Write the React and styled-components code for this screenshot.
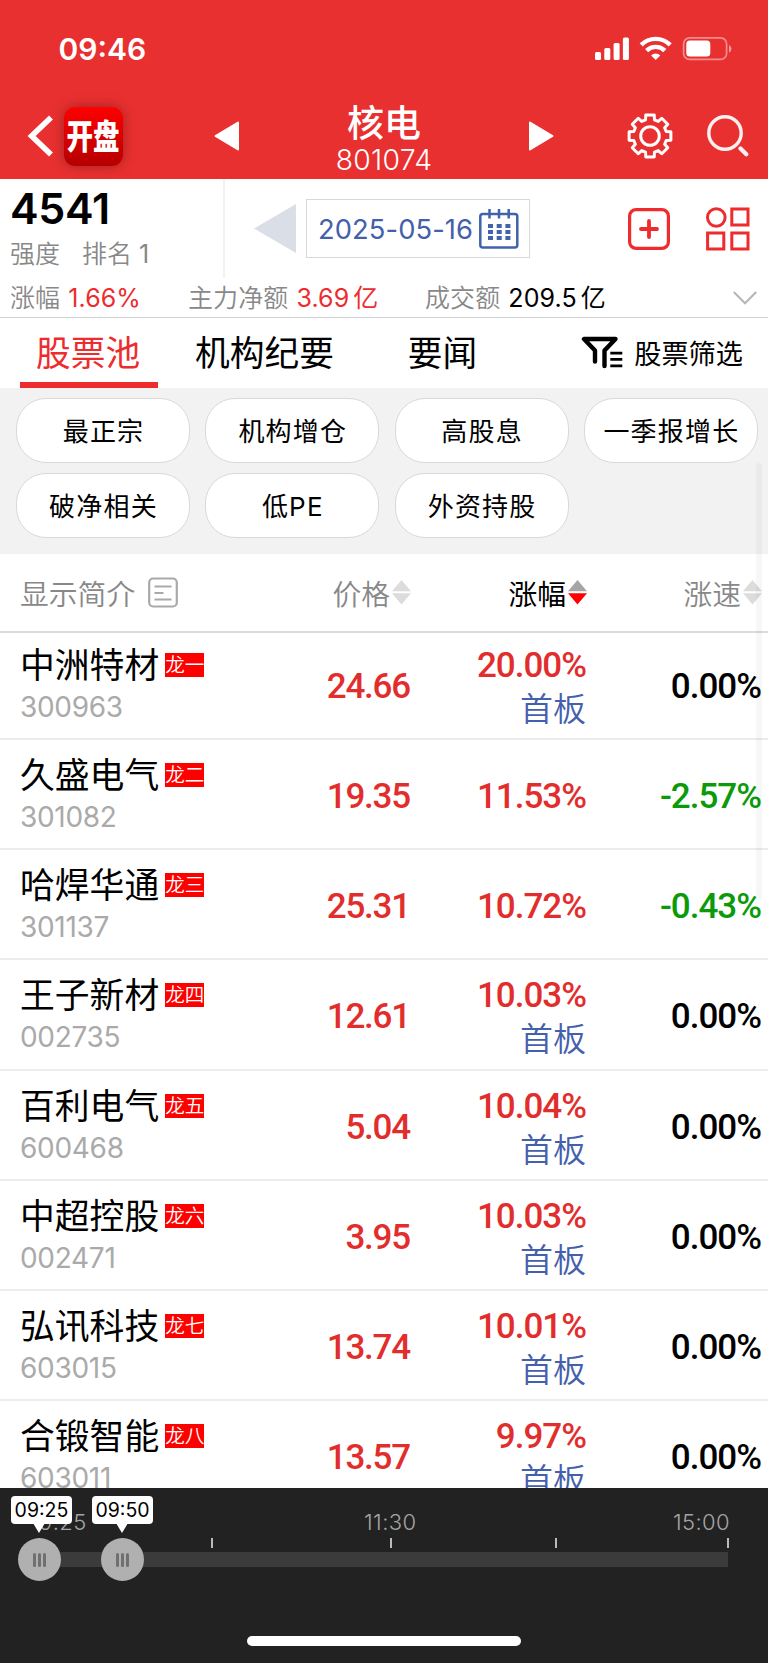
import { useState } from "react";
import styled, { createGlobalStyle } from "styled-components";

const STOCKS = [
  { name: "中洲特材", tag: "龙一", code: "300963", price: "24.66", change: "20.00%", board: "首板", speed: "0.00%" },
  { name: "久盛电气", tag: "龙二", code: "301082", price: "19.35", change: "11.53%", speed: "-2.57%" },
  { name: "哈焊华通", tag: "龙三", code: "301137", price: "25.31", change: "10.72%", speed: "-0.43%" },
  { name: "王子新材", tag: "龙四", code: "002735", price: "12.61", change: "10.03%", board: "首板", speed: "0.00%" },
  { name: "百利电气", tag: "龙五", code: "600468", price: "5.04", change: "10.04%", board: "首板", speed: "0.00%" },
  { name: "中超控股", tag: "龙六", code: "002471", price: "3.95", change: "10.03%", board: "首板", speed: "0.00%" },
  { name: "弘讯科技", tag: "龙七", code: "603015", price: "13.74", change: "10.01%", board: "首板", speed: "0.00%" },
  { name: "合锻智能", tag: "龙八", code: "603011", price: "13.57", change: "9.97%", board: "首板", speed: "0.00%" },
];
const TABS = ["股票池", "机构纪要", "要闻"];
const CHIPS = ["最正宗", "机构增仓", "高股息", "一季报增长", "破净相关", "低PE", "外资持股"];
const TICKS = [0, 172.5, 351.5, 517, 689];
const HANDLES = [
  { time: "09:25", left: 0.5, shift: 2 },
  { time: "09:50", left: 83.5, shift: 0 },
];

function StatusIcons() {
  return (
    <svg width="140" height="28" viewBox="0 0 140 28" fill="#fff">
      <rect x="0" y="17" width="6" height="8" rx="1.5" />
      <rect x="9.3" y="13" width="6" height="12" rx="1.5" />
      <rect x="18.6" y="8" width="6" height="17" rx="1.5" />
      <rect x="27.9" y="2.5" width="6" height="22.5" rx="1.5" />
      <g fill="none" stroke="#fff" strokeWidth="4.4">
        <path d="M46.2 9.9a20.5 20.5 0 0 1 29 0" />
        <path d="M51.6 15.6a13 13 0 0 1 18.2 0" />
      </g>
      <path d="M60.7 25l-4.6-4.6a6.6 6.6 0 0 1 9.2 0z" />
      <rect x="88.6" y="2.8" width="43" height="21.6" rx="6" fill="none" stroke="#fff" strokeOpacity="0.45" strokeWidth="1.7" />
      <rect x="91.3" y="5.6" width="24" height="16" rx="3.5" />
      <path d="M134 10v7.6c3.2-1.6 3.2-6 0-7.6z" fillOpacity="0.5" />
    </svg>
  );
}

function GearIcon() {
  // eight flat teeth around a round hub
  const points = [];
  for (let i = 0; i < 8; i++) {
    const base = (i * Math.PI) / 4 - Math.PI / 2;
    [[-0.27, 16.8], [-0.2, 21.3], [0.2, 21.3], [0.27, 16.8]].forEach(([a, r]) => {
      points.push(`${(23 + r * Math.cos(base + a)).toFixed(2)},${(23 + r * Math.sin(base + a)).toFixed(2)}`);
    });
  }
  return (
    <svg width="46" height="46" viewBox="0 0 46 46" fill="none" stroke="#fff" strokeWidth="3" strokeLinejoin="round">
      <polygon points={points.join(" ")} />
      <circle cx="23" cy="23" r="9.3" />
    </svg>
  );
}

function CalendarIcon() {
  return (
    <svg width="40" height="40" viewBox="0 0 40 40" fill="none" stroke="#4063a9" strokeWidth="2.5">
      <rect x="1.3" y="5" width="37" height="33.5" rx="2.5" />
      <path d="M10.5 0v9.5M20 0v9.5M29.7 0v9.5" />
      <path d="M9 17h5M17.7 17h5M26.4 17h5M9 23h5M17.7 23h5M26.4 23h5M9 29h5M17.7 29h5M26.4 29h5" strokeWidth="3.8" />
    </svg>
  );
}

function FilterIcon() {
  return (
    <svg width="42" height="33" viewBox="0 0 42 33" fill="none" stroke="#000" strokeWidth="4.4" strokeLinecap="round" strokeLinejoin="round">
      <path d="M14 25.5V14.5L3 3h31.5L23.5 14.5V30" />
      <path d="M29.3 17.2h12M29.3 23.4h12M29.3 29.8h12" strokeWidth="2.7" strokeLinecap="butt" />
    </svg>
  );
}

function Sorter({ up = "#dcdcdc", down = "#dcdcdc" }) {
  return (
    <svg width="19" height="25" viewBox="0 0 19 25">
      <path d="M9.5 0L19 11.2H0z" fill={up} />
      <path d="M0 13.3h19L9.5 24.6z" fill={down} />
    </svg>
  );
}

function StockRow({ stock }) {
  return (
    <Row>
      <NameCell>
        <NameLine>
          <Name>{stock.name}</Name>
          <Badge>{stock.tag}</Badge>
        </NameLine>
        <Code>{stock.code}</Code>
      </NameCell>
      <Num $color="#e22d2d" $spacing="-1.2px">{stock.price}</Num>
      <div>
        <Num $color="#e22d2d">{stock.change}</Num>
        {stock.board && <Board>{stock.board}</Board>}
      </div>
      <Num $color={stock.speed.startsWith("-") ? "#0a9a0a" : "#000"}>{stock.speed}</Num>
    </Row>
  );
}

function App() {
  const [tab, setTab] = useState(0);

  return (
    <Page>
      <GlobalStyle />
      <Header>
        <StatusBar>
          <Clock>09:46</Clock>
          <StatusIcons />
        </StatusBar>
        <NavBar>
          <svg width="26" height="42" viewBox="0 0 26 42" fill="none" stroke="#fff" strokeWidth="5.6">
            <path d="M24 2.5L4.6 21l19.4 18.5" />
          </svg>
          <Logo><span>开盘</span></Logo>
          <PrevSector width="25" height="30" viewBox="0 0 25 30">
            <path d="M1.5 15L24 1.5v27z" fill="#fff" stroke="#fff" strokeWidth="2" strokeLinejoin="round" />
          </PrevSector>
          <TitleBox>
            <Title>核电</Title>
            <SubTitle>801074</SubTitle>
          </TitleBox>
          <svg width="25" height="30" viewBox="0 0 25 30">
            <path d="M1 1.5L23.5 15 1 28.5z" fill="#fff" stroke="#fff" strokeWidth="2" strokeLinejoin="round" />
          </svg>
          <NavTools>
            <GearIcon />
            <svg width="42" height="42" viewBox="0 0 42 42" fill="none" stroke="#f8f0f0" strokeWidth="3.4">
              <circle cx="18" cy="18" r="16.2" />
              <path d="M33.5 33.5l5.8 5.8" strokeWidth="4.2" strokeLinecap="round" />
            </svg>
          </NavTools>
        </NavBar>
      </Header>

      <Summary>
        <Strength>
          <Score>4541</Score>
          <Rank><span>强度</span><span>排名 <b>1</b></span></Rank>
        </Strength>
        <DateArea>
          <svg width="42" height="49" viewBox="0 0 42 49">
            <path d="M0 24.5L42 0v49z" fill="#d9dee7" />
          </svg>
          <DateBox>2025-05-16<CalendarIcon /></DateBox>
        </DateArea>
        <SummaryTools>
          <svg width="42" height="42" viewBox="0 0 42 42" fill="none" stroke="#ee2c2e" strokeWidth="3.2">
            <rect x="1.6" y="1.6" width="38.8" height="38.8" rx="6.5" />
            <path d="M21 13v16M13 21h16" strokeWidth="3.8" strokeLinecap="round" />
          </svg>
          <svg width="44" height="44" viewBox="0 0 44 44" fill="none" stroke="#ee2c2e" strokeWidth="3">
            <circle cx="10.3" cy="10.5" r="8.8" />
            <rect x="25.8" y="2" width="16.2" height="16" />
            <rect x="1.6" y="26" width="16.2" height="16" />
            <rect x="25.8" y="26" width="16.2" height="16" />
          </svg>
        </SummaryTools>
      </Summary>
      <Metrics>
        <Metric $width="178px" $color="#ee2c2e">涨幅<b>1.66%</b></Metric>
        <Metric $width="237px" $color="#ee2c2e">主力净额<b>3.69<i>亿</i></b></Metric>
        <Metric $width="308px" $color="#000">成交额<b>209.5<i>亿</i></b></Metric>
        <svg width="24" height="14" viewBox="0 0 24 14" fill="none" stroke="#b5b5b5" strokeWidth="2">
          <path d="M.8 1L12 12.3 23.2 1" />
        </svg>
      </Metrics>

      <TabBar>
        {TABS.map((label, i) => (
          <Tab key={label} type="button" $active={i === tab} onClick={() => setTab(i)}>{label}</Tab>
        ))}
        <FilterButton type="button"><FilterIcon />股票筛选</FilterButton>
      </TabBar>

      <ChipArea>
        {CHIPS.map((label) => <Chip key={label} type="button">{label}</Chip>)}
      </ChipArea>

      <TableHead>
        <Intro>
          显示简介
          <svg width="30" height="31" viewBox="0 0 30 31" fill="none" stroke="#a9a9a9" strokeWidth="2.2">
            <rect x="1.2" y="1.5" width="27.6" height="28" rx="4" />
            <path d="M6.5 9.5h17M6.5 16h9M6.5 22.5h17" />
          </svg>
        </Intro>
        <HeadCell>价格<Sorter /></HeadCell>
        <HeadCell $active>涨幅<Sorter up="#a5a5a5" down="#f00" /></HeadCell>
        <HeadCell>涨速<Sorter /></HeadCell>
      </TableHead>
      <StockList>
        {STOCKS.map((stock) => <StockRow key={stock.code} stock={stock} />)}
      </StockList>

      <Timeline>
        <TimeLabels><span>9:25</span><span>11:30</span><span>15:00</span></TimeLabels>
        <Track>
          {TICKS.map((x) => <Tick key={x} style={{ left: x }} />)}
          {HANDLES.map((h) => (
            <Handle key={h.time} style={{ left: h.left }}>
              <Bubble $shift={h.shift}>{h.time}</Bubble>
              <Grip /><Grip /><Grip />
            </Handle>
          ))}
        </Track>
        <HomeIndicator />
      </Timeline>
      <ScrollThumb />
    </Page>
  )
}

export default App

const GlobalStyle = createGlobalStyle`
  * { box-sizing: border-box; }
  body {
    margin: 0;
    font-family: Inter, "Noto Sans CJK SC", sans-serif;
  }
  svg { display: block; flex-shrink: 0; }
  button {
    padding: 0;
    border: 0;
    background: none;
    color: #000;
    font-family: inherit;
  }
  b { font-weight: 400; }
`
const Page = styled.div`
  position: relative;
  display: flex;
  flex-direction: column;
  width: 768px;
  height: 1663px;
  overflow: hidden;
  background: #fff;
`

const Header = styled.header`
  height: 179px;
  background: #e93030;
  color: #fff;
`
const StatusBar = styled.div`
  display: flex;
  justify-content: space-between;
  height: 93px;
  padding: 35px 33px 0 58.5px;
`
const Clock = styled.div`
  font-size: 30px;
  font-weight: 600;
  line-height: 28px;
`
const NavBar = styled.div`
  display: flex;
  align-items: center;
  height: 86px;
  padding-left: 26.5px;
`
const Logo = styled.div`
  display: flex;
  align-items: center;
  justify-content: center;
  width: 59px;
  height: 59px;
  margin-left: 11px;
  border-radius: 11px;
  background: linear-gradient(#ff0000, #b40000);
  box-shadow: 0 0 12px rgba(90, 20, 20, 0.5);
  font-size: 26.5px;
  font-weight: 900;
  line-height: 1;

  span {
    transform: scaleY(1.28);
  }
`
const PrevSector = styled.svg`
  margin-left: 91.5px;
`
const TitleBox = styled.div`
  width: 290px;
  padding-top: 9px;
  text-align: center;
`
const Title = styled.h1`
  margin: 0;
  font-size: 37px;
  font-weight: 500;
  line-height: 40px;
`
const SubTitle = styled.div`
  font-size: 28.3px;
  font-weight: 350;
  line-height: 33px;
  letter-spacing: 0.3px;
`
const NavTools = styled.div`
  display: flex;
  align-items: center;
  gap: 34px;
  margin-left: 73px;
`

const Summary = styled.section`
  display: flex;
  height: 98.5px;
`
const Strength = styled.div`
  width: 225px;
  padding: 5px 0 0 10px;
  border-right: 2px solid #f2f2f2;
`
const Score = styled.div`
  font-size: 43px;
  font-weight: 600;
  line-height: 48px;
  letter-spacing: -0.3px;
`
const Rank = styled.div`
  display: flex;
  gap: 22px;
  color: #888;
  font-size: 25px;
  font-weight: 350;
  line-height: 45px;
`
const DateArea = styled.div`
  display: flex;
  align-items: center;
  gap: 10px;
  margin: 0 0 0 29px;
`
const DateBox = styled.div`
  display: flex;
  align-items: center;
  justify-content: space-between;
  width: 224px;
  height: 59px;
  padding: 2px 10px 0 11px;
  border: 1px solid #d8d8d8;
  color: #4460ac;
  font-size: 27.3px;
  letter-spacing: 0.1px;
`
const SummaryTools = styled.div`
  display: flex;
  align-items: center;
  gap: 36px;
  margin-left: 98px;
  padding-top: 1px;
`

const Metrics = styled.section`
  display: flex;
  align-items: center;
  height: 40.5px;
  padding: 2px 10px 0;
  border-bottom: 1.5px solid #d2d2d2;
`
const Metric = styled.div`
  width: ${(p) => p.$width};
  color: #888;
  font-size: 25px;
  font-weight: 350;
  line-height: 36px;
  letter-spacing: 0.1px;
  white-space: nowrap;

  b {
    margin-left: 8px;
    color: ${(p) => p.$color};
  }
  i {
    margin-left: 4px;
    font-style: normal;
  }
`

const TabBar = styled.nav`
  display: flex;
  height: 70px;
  padding-left: 20px;
`
const Tab = styled.button`
  height: 70px;
  margin-right: 21px;
  padding: 6px 18px 0 16px;
  border-bottom: 6px solid ${(p) => (p.$active ? "#ee2c2e" : "transparent")};
  color: ${(p) => (p.$active ? "#ee2c2e" : "#000")};
  font-size: 34.7px;
  line-height: 58px;

  &:nth-child(3) { margin-left: 19px; }
`
const FilterButton = styled.button`
  display: flex;
  align-items: center;
  gap: 11px;
  margin-left: auto;
  padding: 0 25px 2px 0;
  font-size: 27.2px;
`

const ChipArea = styled.section`
  display: grid;
  grid-template-columns: repeat(4, 174px);
  grid-auto-rows: 65px;
  gap: 10px 15.3px;
  height: 165.5px;
  padding: 10px 0 0 16px;
  background: #f2f2f2;
`
const Chip = styled.button`
  padding: 0 0 3px 1px;
  border: 1px solid #d9d9d9;
  border-radius: 30px;
  background: #fff;
  font-size: 26px;
  letter-spacing: 1.2px;
  white-space: nowrap;
`

const TableHead = styled.div`
  display: grid;
  grid-template-columns: 200px 191px 176px 175px;
  align-items: center;
  height: 79px;
  padding-left: 20px;
  border-bottom: 2px solid #dcdcdc;
  color: #888;
  font-size: 28.8px;
  font-weight: 350;
`
const Intro = styled.div`
  display: flex;
  align-items: center;
  gap: 13px;
`
const HeadCell = styled.div`
  display: flex;
  align-items: center;
  justify-content: flex-end;
  gap: 2px;
  color: ${(p) => (p.$active ? "#000" : "#888")};
  font-weight: ${(p) => (p.$active ? 400 : 350)};
`

const StockList = styled.main`
  flex: 1;
  min-height: 0;
  overflow: hidden;
`
const Row = styled.div`
  display: grid;
  grid-template-columns: 200px 191px 176px 175px;
  align-items: center;
  height: 110.27px;
  padding: 6px 0 0 20px;
  border-bottom: 2px solid #ececec;

  &:first-child { margin-top: -3px; }
`
const NameCell = styled.div`
  padding-bottom: 3px;
`
const NameLine = styled.div`
  display: flex;
  align-items: center;
  gap: 6px;
`
const Name = styled.div`
  font-size: 34.8px;
  line-height: 44px;
`
const Badge = styled.span`
  width: 39px;
  height: 24px;
  background: #f00;
  color: #fff;
  font-size: 19.5px;
  font-weight: 350;
  line-height: 24px;
  text-align: center;
`
const Code = styled.div`
  color: #aaa;
  font-size: 28px;
  line-height: 41px;
  letter-spacing: -0.3px;
`
const Num = styled.div`
  padding-right: 1px;
  color: ${(p) => p.$color};
  font-family: Roboto, sans-serif;
  font-size: 35px;
  font-weight: 500;
  line-height: 44px;
  letter-spacing: ${(p) => p.$spacing || "-1px"};
  text-align: right;
`
const Board = styled.div`
  padding-right: 1px;
  color: #4460ac;
  font-size: 33px;
  font-weight: 350;
  line-height: 42px;
  text-align: right;
`

const Timeline = styled.footer`
  height: 175px;
  padding: 22px 0 0;
  background: #222;
`
const TimeLabels = styled.div`
  display: flex;
  justify-content: space-between;
  height: 42px;
  padding: 0 38px 0 39px;
  color: #a5a5a5;
  font-size: 22px;
  font-weight: 350;
  line-height: 24px;
  letter-spacing: 0.4px;

  span:nth-child(2) { margin-left: 21px; }
`
const Track = styled.div`
  position: relative;
  width: 689px;
  height: 15px;
  margin-left: 39px;
  background: #3b3b3b;
`
const Tick = styled.i`
  position: absolute;
  top: -14px;
  width: 2px;
  height: 10px;
  margin-left: -1px;
  background: #bbb;
`
const Handle = styled.div`
  position: absolute;
  top: -14px;
  display: flex;
  align-items: center;
  justify-content: center;
  gap: 2px;
  width: 43px;
  height: 43px;
  margin-left: -21.5px;
  border-radius: 50%;
  background: #b0b0b0;
`
const Grip = styled.i`
  width: 3px;
  height: 14px;
  border-radius: 1.5px;
  background: #707070;
`
const Bubble = styled.div`
  position: absolute;
  bottom: 57px;
  left: ${(p) => p.$shift - 9}px;
  width: 61px;
  height: 28px;
  border-radius: 4px;
  background: #fff;
  color: #000;
  font-size: 19.5px;
  line-height: 28px;
  text-align: center;

  &::after {
    content: "";
    position: absolute;
    top: 27px;
    left: ${(p) => 24 - p.$shift}px;
    border: 6px solid transparent;
    border-top: 10px solid #fff;
    border-bottom: 0;
  }
`
const HomeIndicator = styled.div`
  width: 274px;
  height: 10px;
  margin: 69px auto 0;
  border-radius: 5px;
  background: #fff;
`
const ScrollThumb = styled.div`
  position: absolute;
  top: 463px;
  left: 756px;
  width: 6px;
  height: 437px;
  border-radius: 3px;
  background: rgba(0, 0, 0, 0.03);
`
